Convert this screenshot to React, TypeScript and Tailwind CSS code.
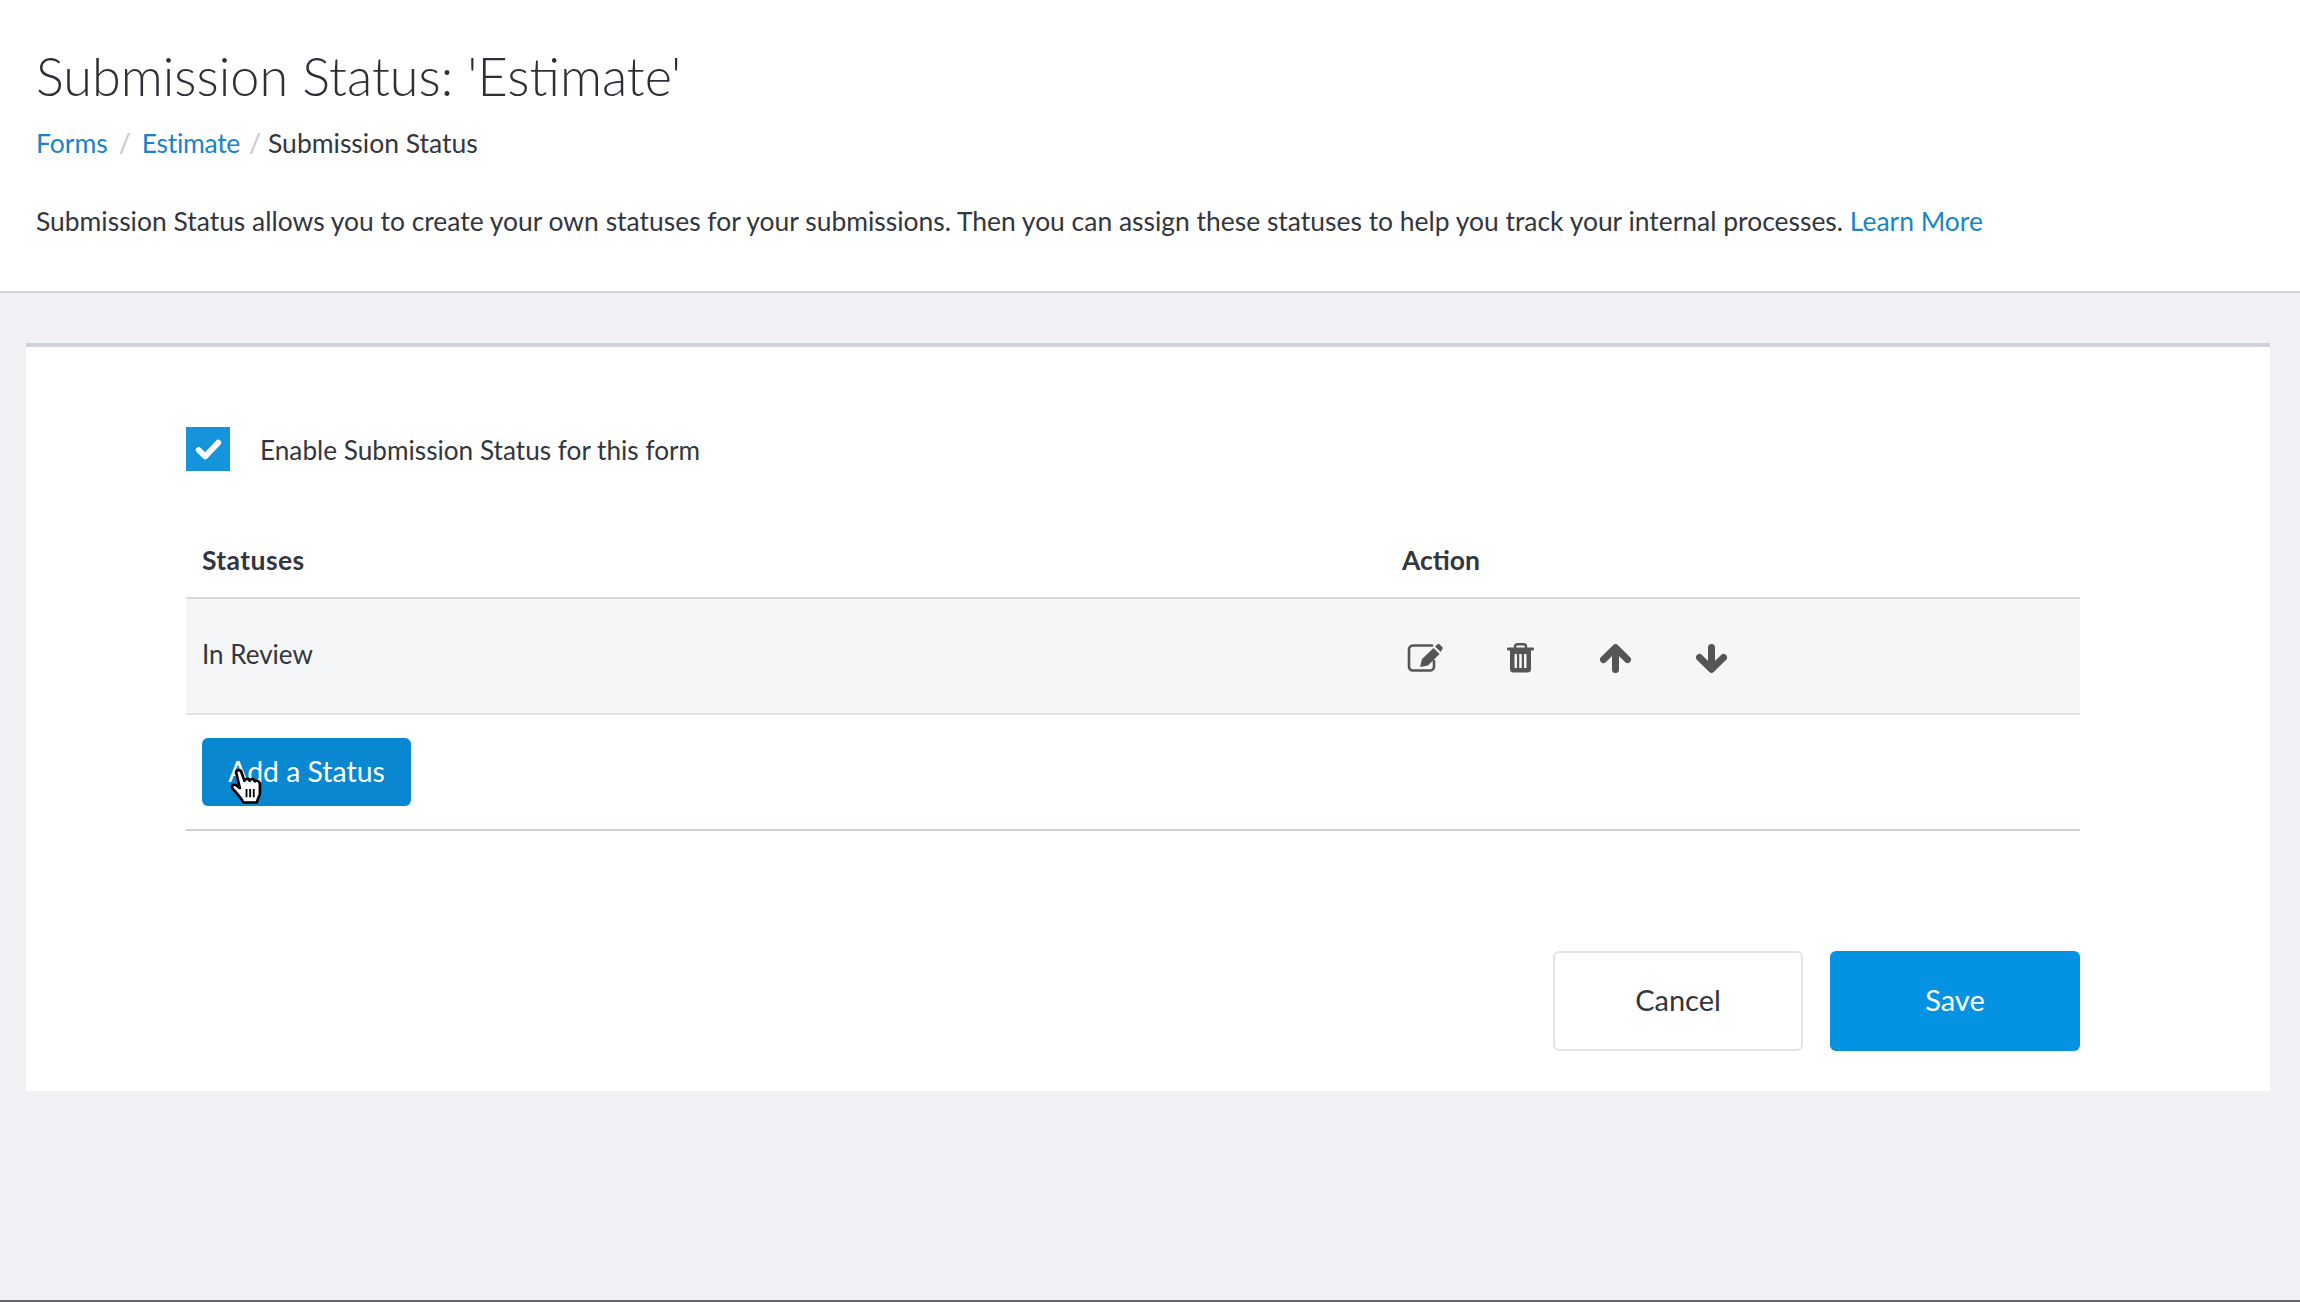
const font = "font-['Lato','Liberation_Sans',sans-serif]";

function CheckIcon() {
  return (
    <svg viewBox="0 0 25 19" className="h-[21px] w-[27px]" fill="none" stroke="#fff" strokeWidth="5.5" strokeLinecap="round" strokeLinejoin="round">
      <path d="M3.5 10L9.5 15.8L21.5 3.2" />
    </svg>
  );
}

function EditIcon() {
  return (
    <svg viewBox="0 0 37 30" className="h-[30px] w-[37px]" fill="#555">
      <path d="M25 2.5H6A4 4 0 0 0 2 6.5V23.5A4 4 0 0 0 6 27.5H23A4 4 0 0 0 27 23.5V18" fill="none" stroke="#555" strokeWidth="2.6" strokeLinecap="round" />
      <path d="M15 16L26.5 5L32.5 11L21 22.5L13 24Z" />
      <path d="M28 3.5L30.5 1.2Q31.5 .5 32.5 1.2L35.5 4.3Q36 5.5 35.3 6.3L33.8 9Z" />
    </svg>
  );
}

function TrashIcon() {
  return (
    <svg viewBox="0 0 27 30" className="h-[30px] w-[27px]" fill="#555">
      <path d="M8 5V3.5Q8 1.2 10.5 1.2H16.5Q19 1.2 19 3.5V5" fill="none" stroke="#555" strokeWidth="2.4" />
      <rect x="0" y="4.5" width="27" height="3" rx="1.2" />
      <path fillRule="evenodd" d="M3 7H24V26Q24 29.5 20.5 29.5H6.5Q3 29.5 3 26ZM7.5 11V25H10V11ZM12.2 11V25H14.8V11ZM17 11V25H19.5V11Z" />
    </svg>
  );
}

function ArrowIcon({ down }: { down?: boolean }) {
  return (
    <svg viewBox="0 0 31 29" className={`h-[29px] w-[31px] ${down ? "rotate-180" : ""}`} fill="none" stroke="#555" strokeWidth="7" strokeLinecap="round" strokeLinejoin="round">
      <path d="M3.5 15.5L15.5 3.8L27.5 15.5M15.5 4V25.5" />
    </svg>
  );
}

function HandCursor() {
  return (
    <svg viewBox="0 0 31 35" className="absolute left-[28px] top-[30px] h-[37px] w-[32px]">
      <path
        d="M6 4C5.5 1.5 10 .5 11 3.5L14 12C15 9.5 18.5 9.5 19 12C20 9.5 23.5 10 24 12.5C25.5 11 28.5 12 29 15V24C29 27 27 28 26 33H13C11 29 8 26 3 20C1 18 2.5 14.5 5.5 16L9.5 19Z"
        fill="#fff"
        stroke="#000"
        strokeWidth="2.6"
        strokeLinejoin="round"
      />
      <path d="M16 20V28M19.5 20V28M23 20V28" fill="none" stroke="#000" strokeWidth="1.8" />
    </svg>
  );
}

export default function App() {
  return (
    <div className={`flex h-[1302px] flex-col border-b-2 border-[#666666] bg-[#f0f1f4] text-[#33363d] ${font}`}>
      {/* Header */}
      <div className="h-[293px] shrink-0 border-b-2 border-[#d0d4dc] bg-white pl-[36px] pr-[35px]">
        <h1 className="pt-[46px] text-[52.2px] font-light leading-[60px] text-[#2d3036]">Submission Status: 'Estimate'</h1>
        <div className="mt-[22px] flex items-center text-[26.5px] leading-[30px]">
          <a className="text-[#1a84c9]">Forms</a>
          <span className="mx-[11px] text-[#c4c6ca]">/</span>
          <a className="tracking-[-0.3px] text-[#1a84c9]">Estimate</a>
          <span className="ml-[9px] mr-[7px] text-[#c4c6ca]">/</span>
          <span>Submission Status</span>
        </div>
        <p className="mt-[48px] text-[26.45px] leading-[30px]">
          Submission Status allows you to create your own statuses for your submissions. Then you can assign these statuses to help you track your internal processes.{" "}
          <a className="text-[#1a84c9]">Learn More</a>
        </p>
      </div>

      {/* Card */}
      <div className="ml-[26px] mr-[30px] mt-[50px] flex flex-col border-t-4 border-[#cfd5da] bg-white pb-[40px] pl-[160px] pr-[190px] pt-[80px]">
        <label className="flex items-center gap-[30px] text-[26.2px]">
          <span className="flex h-[44px] w-[44px] items-center justify-center bg-[#1593db]">
            <CheckIcon />
          </span>
          <span className="pt-[4px]">Enable Submission Status for this form</span>
        </label>

        <div className="mt-[53px] flex h-[75px] items-center border-b-2 border-[#d5d8dd] px-4 text-[26.5px] font-bold">
          <div className="w-[1200px] tracking-[0.4px]">Statuses</div>
          <div>Action</div>
        </div>

        <div className="flex h-[116px] items-center border-b-2 border-[#e2e3e8] bg-[#f5f6f7] px-4 text-[26px]">
          <div className="w-[1200px] pb-[3px]">In Review</div>
          <div className="flex items-center pl-[5px] pt-[4px]">
            <EditIcon />
            <div className="ml-[63px]"><TrashIcon /></div>
            <div className="ml-[66px]"><ArrowIcon /></div>
            <div className="ml-[65px]"><ArrowIcon down /></div>
          </div>
        </div>

        <div className="border-b-2 border-[#ccd0de] px-4 py-[23px]">
          <button className="relative flex h-[68px] w-[209px] items-center justify-center rounded-[6px] bg-[#0a87d1] pb-[2px] text-[28.4px] text-white">
            Add a Status
            <HandCursor />
          </button>
        </div>

        <div className="mt-[120px] flex justify-end gap-[27px] text-[29px]">
          <button className="flex h-[100px] w-[250px] items-center justify-center rounded-[6px] border-2 border-[#e2e3ea] bg-white pb-[2px]">Cancel</button>
          <button className="flex h-[100px] w-[250px] items-center justify-center rounded-[6px] bg-[#0493e2] pb-[2px] text-white">Save</button>
        </div>
      </div>
    </div>
  );
}
